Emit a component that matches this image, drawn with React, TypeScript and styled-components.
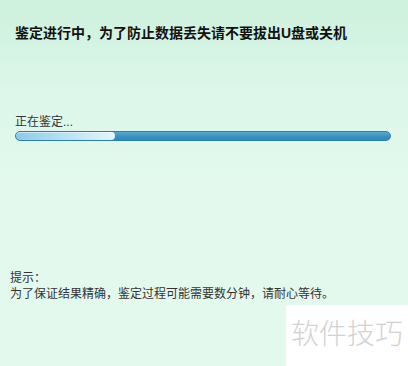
import React from 'react';
import styled, { createGlobalStyle } from 'styled-components';

const GlobalStyle = createGlobalStyle`
    html, body {
        margin: 0;
        padding: 0;
    }
    body {
        font-family: "Liberation Sans", "Noto Sans CJK SC", sans-serif;
    }
`;

interface ProgressProps {
    value: number;
}

function Progress(props: ProgressProps): React.ReactElement {
    return (
        <Track>
            <Fill style={{ width: `${props.value}%` }} />
        </Track>
    );
}

export default function App(): React.ReactElement {
    return (
        <Page>
            <GlobalStyle />
            <Title>鉴定进行中，为了防止数据丢失请不要拔出U盘或关机</Title>

            <Status>
                <Label>正在鉴定...</Label>
                <Progress value={26.6} />
            </Status>

            <Hint>
                <HintLine>提示：</HintLine>
                <HintLine>为了保证结果精确，鉴定过程可能需要数分钟，请耐心等待。</HintLine>
            </Hint>

            <Watermark>软件技巧</Watermark>
        </Page>
    );
}

const Page = styled.div`
    position: relative;
    width: 408px;
    height: 366px;
    overflow: hidden;
    display: flex;
    flex-direction: column;
    background: linear-gradient(180deg, #ccf1dc 0px, #ddf7ea 90px, #e3f9ee 200px, #e3f9ee 366px);
    color: #1a1a1a;
`;

const Title = styled.div`
    margin: 25px 0 0 15px;
    font-size: 14px;
    line-height: 16px;
    font-weight: bold;
    color: #111;
    white-space: nowrap;
`;

const Status = styled.div`
    margin: 74px 17px 0 15px;
    display: flex;
    flex-direction: column;
    gap: 2px;
`;

const Label = styled.div`
    font-size: 12px;
    line-height: 14px;
    color: #333;
`;

const Track = styled.div`
    height: 10px;
    box-sizing: border-box;
    border: 1px solid #2f7fab;
    border-radius: 5px;
    background: linear-gradient(180deg, #5aaad2 0%, #3d93c0 50%, #3388b6 100%);
    overflow: hidden;
`;

const Fill = styled.div`
    height: 100%;
    border-radius: 4px;
    background: linear-gradient(90deg, #8ccbe9 0%, #c0e6f7 60%, #e4f6fd 100%);
    box-shadow: inset 0 1px 0 rgba(255, 255, 255, 0.5);
`;

const Hint = styled.div`
    margin: 130px 0 0 10px;
    display: flex;
    flex-direction: column;
    gap: 2px;
`;

const HintLine = styled.div`
    font-size: 12px;
    line-height: 14px;
    color: #333;
    white-space: nowrap;
`;

const Watermark = styled.div`
    position: absolute;
    left: 286px;
    top: 305px;
    right: 0;
    bottom: 0;
    background: #fff;
    padding: 10px 0 0 5px;
    font-size: 28px;
    line-height: 34px;
    color: #d2d2d2;
    font-family: "Noto Sans CJK SC", sans-serif;
    font-weight: 300;
`;
